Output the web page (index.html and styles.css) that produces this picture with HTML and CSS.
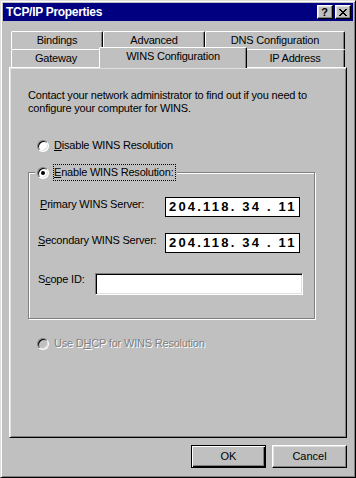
FILE: index.html
```html
<!DOCTYPE html>
<html lang="en">
<head>
  <meta charset="UTF-8">
  <meta name="viewport" content="width=device-width, initial-scale=1.0">
  <title>TCP/IP Properties</title>
  <link rel="stylesheet" href="styles.css">
</head>
<body>

  <div class="window">
    <div class="titlebar">
      <div class="title">TCP/IP Properties</div>
      <div class="title-btn help">?</div>
      <div class="title-btn close">
        <svg width="8" height="7" viewBox="0 0 8 7" shape-rendering="crispEdges">
          <path d="M0 0h2v1H0zM6 0h2v1H6zM1 1h2v1H1zM5 1h2v1H5zM2 2h4v1H2zM3 3h2v1H3zM2 4h4v1H2zM1 5h2v1H1zM5 5h2v1H5zM0 6h2v1H0zM6 6h2v1H6z" fill="#000"/>
        </svg>
      </div>
    </div>

    <div class="content">
      <div class="tabs tabs-back">
        <div class="tab tab-bindings">Bindings</div>
        <div class="tab tab-advanced">Advanced</div>
        <div class="tab tab-dns">DNS Configuration</div>
      </div>
      <div class="tabs tabs-front">
        <div class="tab tab-gateway">Gateway</div>
        <div class="tab tab-wins active">WINS Configuration</div>
        <div class="tab tab-ip">IP Address</div>
      </div>

      <div class="panel">
        <p class="intro">Contact your network administrator to find out if you need to<br>configure your computer for WINS.</p>

        <div class="radio option-disable">
          <span class="radio-dot"></span>
          <span><u>D</u>isable WINS Resolution</span>
        </div>

        <fieldset class="group">
          <legend class="radio">
            <span class="radio-dot checked"></span>
            <span class="focus"><u>E</u>nable WINS Resolution:</span>
          </legend>

          <div class="field-row row-primary">
            <label class="label-wide"><u>P</u>rimary WINS Server:</label>
            <div class="ip-box">204.118. 34 . 11</div>
          </div>

          <div class="field-row row-secondary">
            <label class="label-wide"><u>S</u>econdary WINS Server:</label>
            <div class="ip-box">204.118. 34 . 11</div>
          </div>

          <div class="field-row row-scope">
            <label class="label-short">S<u>c</u>ope ID:</label>
            <input class="text-box" type="text" value="">
          </div>
        </fieldset>

        <div class="radio disabled option-dhcp">
          <span class="radio-dot"></span>
          <span>Use D<u>H</u>CP for WINS Resolution</span>
        </div>
      </div>

      <div class="actions">
        <button class="btn default">OK</button>
        <button class="btn">Cancel</button>
      </div>
    </div>
  </div>

</body>
</html>
```

FILE: styles.css
```css
:root {
  --face: #c0c0c0;
  --light: #dfdfdf;
  --shadow: #808080;
  --title: #000080;
}

* {
  box-sizing: border-box;
  margin: 0;
  padding: 0;
}

body {
  background-color: var(--face);
  font-family: "Liberation Sans", Arial, sans-serif;
  font-size: 11px;
  line-height: 13px;
  letter-spacing: -0.2px;
  color: #000;
}

.window {
  width: 356px;
  height: 478px;
  padding: 2px;
  border: 1px solid;
  border-color: var(--light) #000 #000 var(--light);
  box-shadow: inset 1px 1px #fff, inset -1px -1px var(--shadow);
  display: flex;
  flex-direction: column;
}

/* title bar */

.titlebar {
  height: 18px;
  background-color: var(--title);
  display: flex;
  align-items: center;
  padding: 0 2px 0 3px;
}

.title {
  flex: 1;
  color: #fff;
  font-weight: bold;
  font-size: 12px;
  letter-spacing: -0.3px;
}

.title-btn {
  width: 16px;
  height: 14px;
  background-color: var(--face);
  border: 1px solid;
  border-color: #fff #000 #000 #fff;
  box-shadow: inset -1px -1px var(--shadow), inset 1px 1px var(--light);
  display: flex;
  align-items: center;
  justify-content: center;
}

.title-btn.help {
  font-weight: bold;
  font-size: 11px;
  line-height: 11px;
  letter-spacing: 0;
  padding-right: 1px;
}

.title-btn.close {
  margin-left: 2px;
}

.title-btn svg {
  display: block;
  margin: 0 1px 0 0;
}

/* tabs */

.content {
  flex: 1;
  display: flex;
  flex-direction: column;
  padding: 10px 6px 0;
}

.tabs {
  display: flex;
  margin-left: 2px;
}

.tabs-front {
  margin-top: -2px;
  align-items: flex-end;
}

.tab {
  height: 18px;
  padding-top: 2px;
  text-align: center;
  white-space: nowrap;
  background-color: var(--face);
  border: 1px solid #fff;
  border-bottom: none;
  border-right-color: #000;
  border-radius: 2px 2px 0 0;
  box-shadow: inset -1px 0 var(--shadow);
}

.tab-bindings { width: 92px; }
.tab-advanced { width: 102px; }
.tab-dns { width: 140px; }
.tab-gateway { width: 90px; }
.tab-ip { width: 100px; }

.tab-wins {
  width: 144px;
}

.tab.active {
  width: 148px;
  height: 21px;
  margin: 0 -2px -1px;
  position: relative;
  z-index: 1;
}

/* panel */

.panel {
  height: 371px;
  border: 1px solid;
  border-color: #fff #000 #000 #fff;
  box-shadow: inset 1px 1px var(--light), inset -1px -1px var(--shadow);
  padding: 21px 0 0 18px;
}

.intro {
  margin-bottom: 24px;
}

.radio {
  display: flex;
  align-items: center;
  gap: 5px;
  padding-left: 9px;
}

.radio-dot {
  width: 12px;
  height: 12px;
  flex-shrink: 0;
  border-radius: 50%;
  background-color: #fff;
  border: 1px solid;
  border-color: var(--shadow) #fff #fff var(--shadow);
  box-shadow: inset 1px 1px #000, inset -1px -1px var(--light);
  display: flex;
  align-items: center;
  justify-content: center;
}

.radio-dot.checked::after {
  content: "";
  width: 4px;
  height: 4px;
  border-radius: 50%;
  background-color: #000;
}

.radio.disabled {
  color: var(--shadow);
  text-shadow: 1px 1px #fff;
}

.radio.disabled .radio-dot {
  background-color: var(--face);
}

.group {
  width: 287px;
  margin-top: 12px;
  border: 1px solid var(--shadow);
  box-shadow: 1px 1px #fff, inset 1px 1px #fff;
  padding: 0 0 23px;
}

.group legend {
  margin-left: 6px;
  padding: 0 1px 0 2px;
  gap: 4px;
  background-color: var(--face);
}

.focus {
  border: 1px dotted #000;
  padding: 1px 1px 1px 0;
}

.field-row {
  display: flex;
  align-items: flex-start;
  padding-left: 9px;
}

.field-row label {
  margin-top: 1px;
}

.row-primary {
  margin-top: 16px;
  padding-left: 11px;
}

.row-primary .label-wide {
  width: 125px;
}

.row-secondary {
  margin-top: 16px;
}

.label-wide {
  width: 127px;
}

.row-scope {
  margin-top: 20px;
}

.row-scope label {
  margin-top: 0;
}

.label-short {
  width: 57px;
}

.ip-box {
  width: 135px;
  height: 20px;
  background-color: #fff;
  border: 1px solid #000;
  padding-left: 3px;
  font-weight: bold;
  font-size: 13px;
  line-height: 17px;
  letter-spacing: 2.2px;
  white-space: pre;
  overflow: hidden;
}

.text-box {
  width: 208px;
  height: 22px;
  background-color: #fff;
  border: 1px solid;
  border-color: var(--shadow) #fff #fff var(--shadow);
  box-shadow: inset 1px 1px #000, inset -1px -1px var(--light);
  font: inherit;
  outline: none;
}

.option-dhcp {
  margin-top: 18px;
}

/* buttons */

.actions {
  display: flex;
  justify-content: flex-end;
  gap: 6px;
  margin-top: 7px;
}

.btn {
  width: 75px;
  height: 23px;
  background-color: var(--face);
  border: 1px solid;
  border-color: #fff #000 #000 #fff;
  box-shadow: inset -1px -1px var(--shadow), inset 1px 1px var(--light);
  font: inherit;
  color: #000;
  letter-spacing: 0;
}

.btn.default {
  border-color: #000;
  box-shadow: inset 1px 1px #fff, inset -1px -1px #000, inset -2px -2px var(--shadow);
}
```
